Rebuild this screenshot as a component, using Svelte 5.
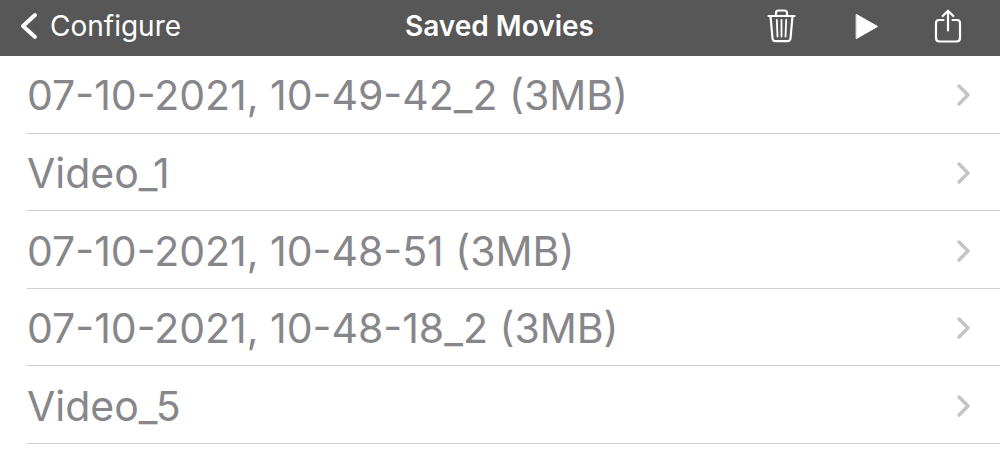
<script>
  let movies = [
    '07-10-2021, 10-49-42_2 (3MB)',
    'Video_1',
    '07-10-2021, 10-48-51 (3MB)',
    '07-10-2021, 10-48-18_2 (3MB)',
    'Video_5'
  ]
</script>

<header>
  <button class="back">
    <svg width="18" height="28" viewBox="0 0 18 28" aria-hidden="true">
      <path d="M15 3 L3 14 L15 25" />
    </svg>
    Configure
  </button>
  <h1>Saved Movies</h1>
  <div class="actions">
    <button aria-label="Delete">
      <svg width="32" height="36" viewBox="0 0 32 36" aria-hidden="true">
        <path d="M2.5 8 H28.5 M4.5 8 L6.5 30.5 Q6.8 33.200 9.500 33.200 H21.500 Q24.200 33.200 24.500 30.500 L26.500 8" />
        <path d="M10 8 V5 Q10 2.500 12.500 2.500 H18.500 Q21 2.500 21 5 V8" />
        <path class="thin" d="M10.800 12 L11.500 28.500 M15.500 12 V28.500 M20.200 12 L19.500 28.500" />
      </svg>
    </button>
    <button aria-label="Play">
      <svg width="32" height="36" viewBox="0 0 32 36" aria-hidden="true">
        <path class="solid" d="M7.500 6.500 L28.500 18.500 L7.500 30.500 Z" />
      </svg>
    </button>
    <button aria-label="Share">
      <svg width="32" height="36" viewBox="0 0 32 36" aria-hidden="true">
        <path d="M11.500 12 H7 Q4 12 4 15 V30 Q4 33.500 7.500 33.500 H24.500 Q28 33.500 28 30 V15 Q28 12 25 12 H20.500" />
        <path d="M16 22.500 V3 M10.700 8 L16 2.700 L21.300 8" />
      </svg>
    </button>
  </div>
</header>

<ul>
  {#each movies as movie}
    <li>
      <button class="movie">
        <span>{movie}</span>
        <svg width="16" height="24" viewBox="0 0 16 24" aria-hidden="true">
          <path d="M3 3 L12 12 L3 21" />
        </svg>
      </button>
    </li>
  {/each}
</ul>

<style>
:global(body) {
  margin: 0;
  background: #fff;
  font-family: Inter, "Liberation Sans", sans-serif;
}
button {
  display: flex;
  align-items: center;
  padding: 0;
  border: 0;
  background: none;
  color: inherit;
  font: inherit;
  cursor: pointer;
}
svg {
  flex: none;
  fill: none;
  stroke: currentColor;
  stroke-width: 2.2;
  stroke-linecap: round;
  stroke-linejoin: round;
}
header {
  display: grid;
  grid-template-columns: 1fr auto 1fr;
  align-items: center;
  box-sizing: border-box;
  height: 56px;
  padding: 0 36px 4px 20px;
  background: #575757;
  color: #fff;
}
h1 {
  margin: 0;
  padding-left: 15px;
  font-size: 28px;
  font-weight: 600;
}
.back {
  justify-self: start;
  gap: 12px;
  font-size: 28px;
}
.back svg {
  stroke-width: 4;
}
.actions {
  display: flex;
  justify-content: flex-end;
  gap: 51px;
}
.thin {
  stroke-width: 1.8;
}
.solid {
  fill: currentColor;
  stroke-width: 1;
}
ul {
  display: grid;
  grid-auto-rows: 1fr;
  min-height: 84vh;
  margin: 0;
  padding: 0 0 0 27px;
  list-style: none;
}
li {
  display: flex;
  border-bottom: 1px solid #d0d0d2;
}
.movie {
  flex: 1;
  justify-content: space-between;
  padding: 2px 28px 0 0;
  color: #86868b;
  font-size: 41px;
  text-align: left;
}
.movie svg {
  color: #c4c4c7;
  stroke-width: 3.5;
}
</style>
